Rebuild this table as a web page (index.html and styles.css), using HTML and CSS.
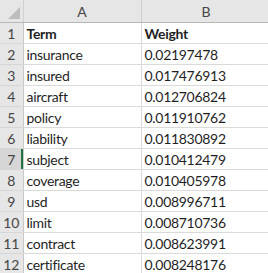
FILE: index.html
```html
<!DOCTYPE html>
<html lang="en">
<head>
  <meta charset="UTF-8" />
  <title>Term weights</title>
  <link rel="stylesheet" href="styles.css">
</head>
<body>

  <table class="sheet">
    <colgroup>
      <col class="col-rownum" />
      <col class="col-a" />
      <col class="col-b" />
    </colgroup>
    <thead>
      <tr>
        <th class="corner"><span class="corner-tri"></span></th>
        <th class="colhead">A</th>
        <th class="colhead">B</th>
      </tr>
    </thead>
    <tbody>
      <tr><th class="rownum">1</th><td class="bold">Term</td><td class="bold">Weight</td></tr>
      <tr><th class="rownum">2</th><td>insurance</td><td>0.02197478</td></tr>
      <tr><th class="rownum">3</th><td>insured</td><td>0.017476913</td></tr>
      <tr><th class="rownum">4</th><td>aircraft</td><td>0.012706824</td></tr>
      <tr><th class="rownum">5</th><td>policy</td><td>0.011910762</td></tr>
      <tr><th class="rownum">6</th><td>liability</td><td>0.011830892</td></tr>
      <tr><th class="rownum active">7</th><td>subject</td><td>0.010412479</td></tr>
      <tr><th class="rownum">8</th><td>coverage</td><td>0.010405978</td></tr>
      <tr><th class="rownum">9</th><td>usd</td><td>0.008996711</td></tr>
      <tr><th class="rownum">10</th><td>limit</td><td>0.008710736</td></tr>
      <tr><th class="rownum">11</th><td>contract</td><td>0.008623991</td></tr>
      <tr><th class="rownum">12</th><td>certificate</td><td>0.008248176</td></tr>
    </tbody>
  </table>

</body>
</html>
```

FILE: styles.css
```css
body {
  margin: 0;
  padding: 0;
  background: #fff;
  overflow: hidden;
  font-family: Lato, "Open Sans", sans-serif;
}

.sheet {
  border-collapse: collapse;
  table-layout: fixed;
  width: 271px;
  font-size: 14px;
  color: #1f1f1f;
}

.col-rownum { width: 23px; }
.col-a { width: 118px; }
.col-b { width: 130px; }

.sheet th,
.sheet td {
  padding: 0;
  white-space: nowrap;
  overflow: hidden;
}

.sheet thead th {
  height: 22px;
  background: #e6e6e6;
  border-right: 1px solid #d0d0d0;
  border-bottom: 1px solid #b8b8b8;
  font-weight: normal;
  color: #454545;
  text-align: center;
}

.corner {
  position: relative;
}

/* little grey triangle in the select-all box */
.corner-tri {
  position: absolute;
  right: 3px;
  bottom: 3px;
  width: 0;
  height: 0;
  border-left: 12px solid transparent;
  border-bottom: 12px solid #bdbdbd;
}

.sheet tbody tr {
  height: 21px;
}

.rownum {
  background: #e6e6e6;
  border-right: 1px solid #c8c8c8;
  border-bottom: 1px solid #d6d6d6;
  font-weight: normal;
  color: #454545;
  text-align: center;
}

.rownum.active {
  background: #d6d6d6;
  box-shadow: inset -2px 0 0 #217346;
}

.sheet td {
  border-right: 1px solid #dadada;
  border-bottom: 1px solid #dadada;
  padding-left: 3px;
  letter-spacing: -0.3px;
}

.sheet td.bold {
  font-weight: bold;
}
```
